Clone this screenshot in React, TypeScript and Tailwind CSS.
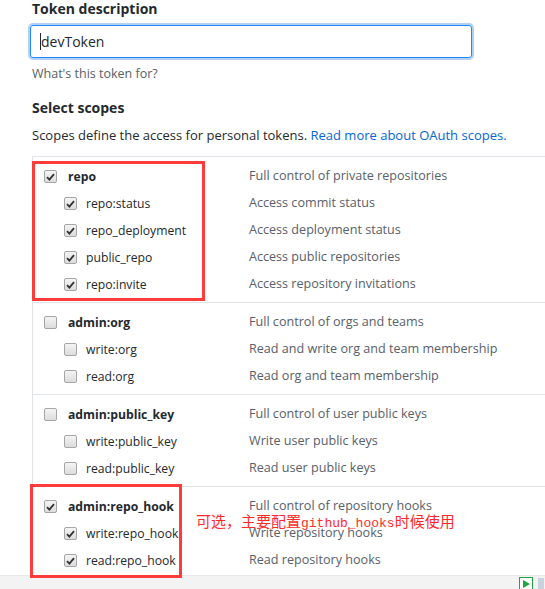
import { Fragment } from 'react'

type Scope = { name: string; desc: string; checked: boolean }
type Group = { parent: Scope; children: Scope[] }

const groups: Group[] = [
  {
    parent: { name: 'repo', desc: 'Full control of private repositories', checked: true },
    children: [
      { name: 'repo:status', desc: 'Access commit status', checked: true },
      { name: 'repo_deployment', desc: 'Access deployment status', checked: true },
      { name: 'public_repo', desc: 'Access public repositories', checked: true },
      { name: 'repo:invite', desc: 'Access repository invitations', checked: true },
    ],
  },
  {
    parent: { name: 'admin:org', desc: 'Full control of orgs and teams', checked: false },
    children: [
      { name: 'write:org', desc: 'Read and write org and team membership', checked: false },
      { name: 'read:org', desc: 'Read org and team membership', checked: false },
    ],
  },
  {
    parent: { name: 'admin:public_key', desc: 'Full control of user public keys', checked: false },
    children: [
      { name: 'write:public_key', desc: 'Write user public keys', checked: false },
      { name: 'read:public_key', desc: 'Read user public keys', checked: false },
    ],
  },
  {
    parent: { name: 'admin:repo_hook', desc: 'Full control of repository hooks', checked: true },
    children: [
      { name: 'write:repo_hook', desc: 'Write repository hooks', checked: true },
      { name: 'read:repo_hook', desc: 'Read repository hooks', checked: true },
    ],
  },
]

function Box({ checked }: { checked: boolean }) {
  return (
    <span className="w-[13px] h-[13px] shrink-0 rounded-[2px] border border-[#a6a6a6] bg-gradient-to-b from-[#f4f4f4] to-[#dcdcdc] flex items-center justify-center">
      {checked && (
        <svg width="9" height="8" viewBox="0 0 9 8">
          <path d="M1 4.2 L3.4 6.6 L8 1.2" fill="none" stroke="#333" strokeWidth="1.8" />
        </svg>
      )}
    </span>
  )
}

function Row({ scope, child }: { scope: Scope; child?: boolean }) {
  return (
    <div className="h-[27px] flex items-center">
      <div className={child ? 'w-[216px] flex items-center pl-[31px]' : 'w-[216px] flex items-center pl-[11px]'}>
        <Box checked={scope.checked} />
        <span className={child ? 'ml-[9px] text-[12.2px] text-[#24292e]' : 'ml-[11px] text-[12.2px] font-bold text-[#24292e]'}>
          {scope.name}
        </span>
      </div>
      <span className="text-[12.6px] text-[#586069] whitespace-nowrap">{scope.desc}</span>
    </div>
  )
}

export default function App() {
  return (
    <div className="relative w-[545px] h-[589px] overflow-hidden bg-white" style={{ fontFamily: '"Open Sans", "Noto Sans", sans-serif' }}>
      <div className="pl-[32px]">
        <div className="text-[14px] font-bold text-[#24292e] leading-[18px]">Token description</div>
        <div className="mt-[7px] -ml-[2px] w-[442px] h-[33px] rounded-[3px] border border-[#2188ff] shadow-[0_0_0_2px_rgba(3,102,214,0.3)] flex items-center px-[9px] text-[14px] text-[#24292e]">
          <span className="w-px h-[17px] bg-[#24292e]" />
          devToken
        </div>
        <div className="mt-[7px] text-[12.5px] text-[#586069]">What's this token for?</div>
        <div className="mt-[15px] text-[14px] font-bold text-[#24292e] leading-[18px]">Select scopes</div>
        <div className="mt-[9px] text-[13px] text-[#24292e] whitespace-nowrap">
          Scopes define the access for personal tokens.{' '}
          <span className="text-[#0366d6]">Read more about OAuth scopes.</span>
        </div>
        <div className="mt-[11px] border-l border-t border-[#e1e4e8]">
          {groups.map((g) => (
            <div key={g.parent.name} className="pt-[6px] pb-[4px] border-b border-[#e1e4e8]">
              <Row scope={g.parent} />
              {g.children.map((c) => (
                <Fragment key={c.name}>
                  <Row scope={c} child />
                </Fragment>
              ))}
            </div>
          ))}
        </div>
      </div>

      <div className="absolute left-0 right-0 bottom-0 h-[14px] bg-[#f3f3f3] border-t border-[#e8e8e8]">
        <svg className="absolute left-[519px] top-[1px]" width="14" height="14" viewBox="0 0 14 14">
          <rect x="0.5" y="0.5" width="13" height="13" fill="#fff" stroke="#1fa541" />
          <path d="M4 3 L11 7 L4 11 Z" fill="#1fa541" />
        </svg>
        <span className="absolute left-[538px] top-[2px] w-[6px] h-[12px] bg-[#c9d3dd]" />
      </div>

      <div className="absolute left-[32px] top-[161px] w-[173px] h-[140px] border-[3px] border-[#ff3b3b]" />
      <div className="absolute left-[30px] top-[484px] w-[152px] h-[94px] border-[3px] border-[#ff3b3b]" />
      <div
        className="absolute left-[196px] top-[511px] text-[15px] leading-[20px] text-[#ff2a2a] whitespace-nowrap"
        style={{ fontFamily: '"Noto Sans CJK SC", sans-serif' }}
      >
        可选，主要配置<span className="text-[13px]" style={{ fontFamily: '"Liberation Mono", monospace' }}>github_hooks</span>时候使用
      </div>
    </div>
  )
}
